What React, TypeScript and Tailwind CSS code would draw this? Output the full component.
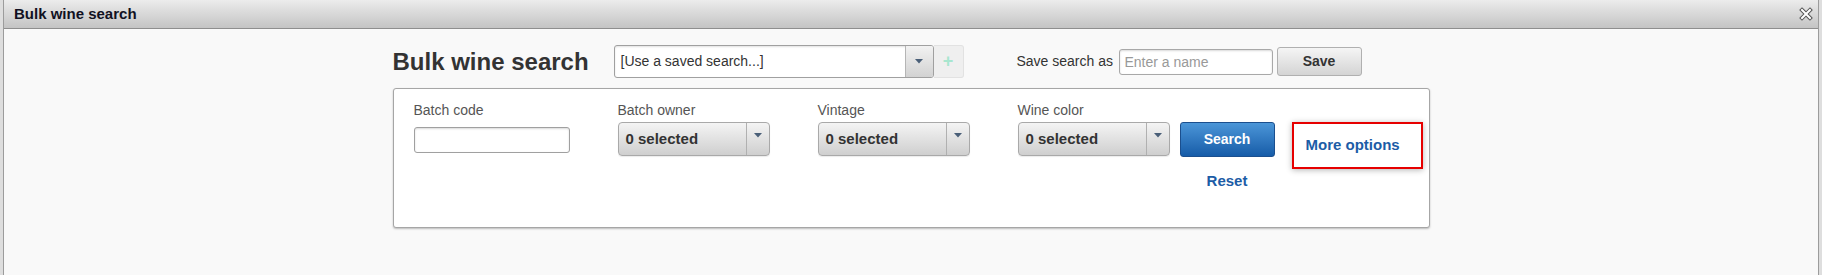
import React from "react";

function Caret() {
  return (
    <svg width="8" height="5" viewBox="0 0 8 5" className="block">
      <path d="M0 0 L8 0 L4 4.5 Z" fill="#4a5f78" />
    </svg>
  );
}

function MultiSelect() {
  return (
    <div className="flex h-[34px] w-[152px] rounded-[4px] border border-[#a9a9a9] bg-gradient-to-b from-[#f4f4f4] to-[#cfcfcf] shadow-[0_1px_1px_rgba(0,0,0,0.08)]">
      <div className="flex flex-1 items-center pl-[7px] text-[15px] font-bold text-[#333]">0 selected</div>
      <div className="flex w-[23px] justify-center border-l border-[#b0b0b0] pt-[10px]">
        <Caret />
      </div>
    </div>
  );
}

export default function App() {
  return (
    <div
      className="h-[275px] w-full overflow-hidden bg-[#dedede] px-[3px]"
      style={{ fontFamily: '"Liberation Sans", Arial, sans-serif' }}
    >
      <div className="flex h-full flex-col border-x border-[#9c9c9c] bg-[#f9f9f9]">
        {/* title bar */}
        <div className="flex h-[29px] items-center justify-between border-b border-[#8e8e8e] bg-gradient-to-b from-[#ececec] to-[#c4c4c4] pl-[10px] pr-[4px]">
          <span className="text-[15px] font-bold text-[#111122]">Bulk wine search</span>
          <svg width="14" height="14" viewBox="0 0 14 14" className="mr-[1px]">
            <path d="M3 3 L11 11 M11 3 L3 11" stroke="#555" strokeWidth="4" strokeLinecap="square" />
            <path d="M3 3 L11 11 M11 3 L3 11" stroke="#fff" strokeWidth="2" strokeLinecap="square" />
          </svg>
        </div>

        {/* content */}
        <div className="mx-auto w-[1037px] pt-[16px]">
          {/* top row */}
          <div className="flex items-center">
            <div className="w-[221px] text-[24px] font-bold leading-[28px] text-[#333]">Bulk wine search</div>
            <div className="flex h-[33px] w-[320px] rounded-[3px] border border-[#a0a0a0] bg-white shadow-[inset_0_1px_2px_rgba(0,0,0,0.12)]">
              <div className="flex flex-1 items-center pl-[6px] text-[14px] text-[#333]">[Use a saved search...]</div>
              <div className="flex w-[28px] items-center justify-center rounded-r-[2px] border-l border-[#b5b5b5] bg-gradient-to-b from-[#f2f2f2] to-[#d2d2d2]">
                <Caret />
              </div>
            </div>
            <div className="flex h-[33px] w-[30px] items-center justify-center rounded-r-[3px] border border-l-0 border-[#e2e2e2] bg-[#efefef] text-[18px] font-bold text-[#a8e6cf]">+</div>
            <div className="ml-[53px] w-[102px] text-[14px] text-[#333]">Save search as</div>
            <input
              className="h-[26px] w-[154px] rounded-[3px] border border-[#a8a8a8] bg-white px-[5px] text-[14px] text-[#333] placeholder:text-[#999] shadow-[inset_0_1px_2px_rgba(0,0,0,0.15)] outline-none"
              placeholder="Enter a name"
            />
            <button className="ml-[4px] h-[29px] w-[85px] rounded-[3px] border border-[#b0b0b0] bg-gradient-to-b from-[#f5f5f5] to-[#d4d4d4] text-[14px] font-bold text-[#333]">
              Save
            </button>
          </div>

          {/* panel */}
          <div className="mt-[10px] flex h-[140px] rounded-[3px] border border-[#a6a6a6] bg-white pl-[20px] pt-[13px] shadow-[0_1px_2px_rgba(0,0,0,0.25)]">
            <div className="w-[204px]">
              <div className="text-[14px] leading-[16px] text-[#555]">Batch code</div>
              <input className="mt-[9px] h-[26px] w-[156px] rounded-[3px] border border-[#a0a0a0] bg-white shadow-[inset_0_1px_2px_rgba(0,0,0,0.15)] outline-none" />
            </div>
            <div className="w-[200px]">
              <div className="text-[14px] leading-[16px] text-[#555]">Batch owner</div>
              <div className="mt-[4px]">
                <MultiSelect />
              </div>
            </div>
            <div className="w-[200px]">
              <div className="text-[14px] leading-[16px] text-[#555]">Vintage</div>
              <div className="mt-[4px]">
                <MultiSelect />
              </div>
            </div>
            <div className="w-[162px]">
              <div className="text-[14px] leading-[16px] text-[#555]">Wine color</div>
              <div className="mt-[4px]">
                <MultiSelect />
              </div>
            </div>
            <div className="flex w-[95px] flex-col items-center pt-[20px]">
              <button className="h-[35px] w-[95px] rounded-[3px] border border-[#1b4f8e] bg-gradient-to-b from-[#4b96d8] to-[#165ca8] text-[14px] font-bold text-white">
                Search
              </button>
              <div className="mt-[15px] text-[15px] font-bold leading-[18px] text-[#1c5ca6]">Reset</div>
            </div>
            <div className="ml-[17px] pt-[20px]">
              <div className="flex h-[47px] w-[131px] items-center border-2 border-[#e60000] pl-[12px] shadow-[0_1px_6px_rgba(0,0,0,0.3)]">
                <span className="text-[15px] font-bold text-[#1c5ca6]">More options</span>
              </div>
            </div>
          </div>
        </div>
      </div>
    </div>
  );
}
